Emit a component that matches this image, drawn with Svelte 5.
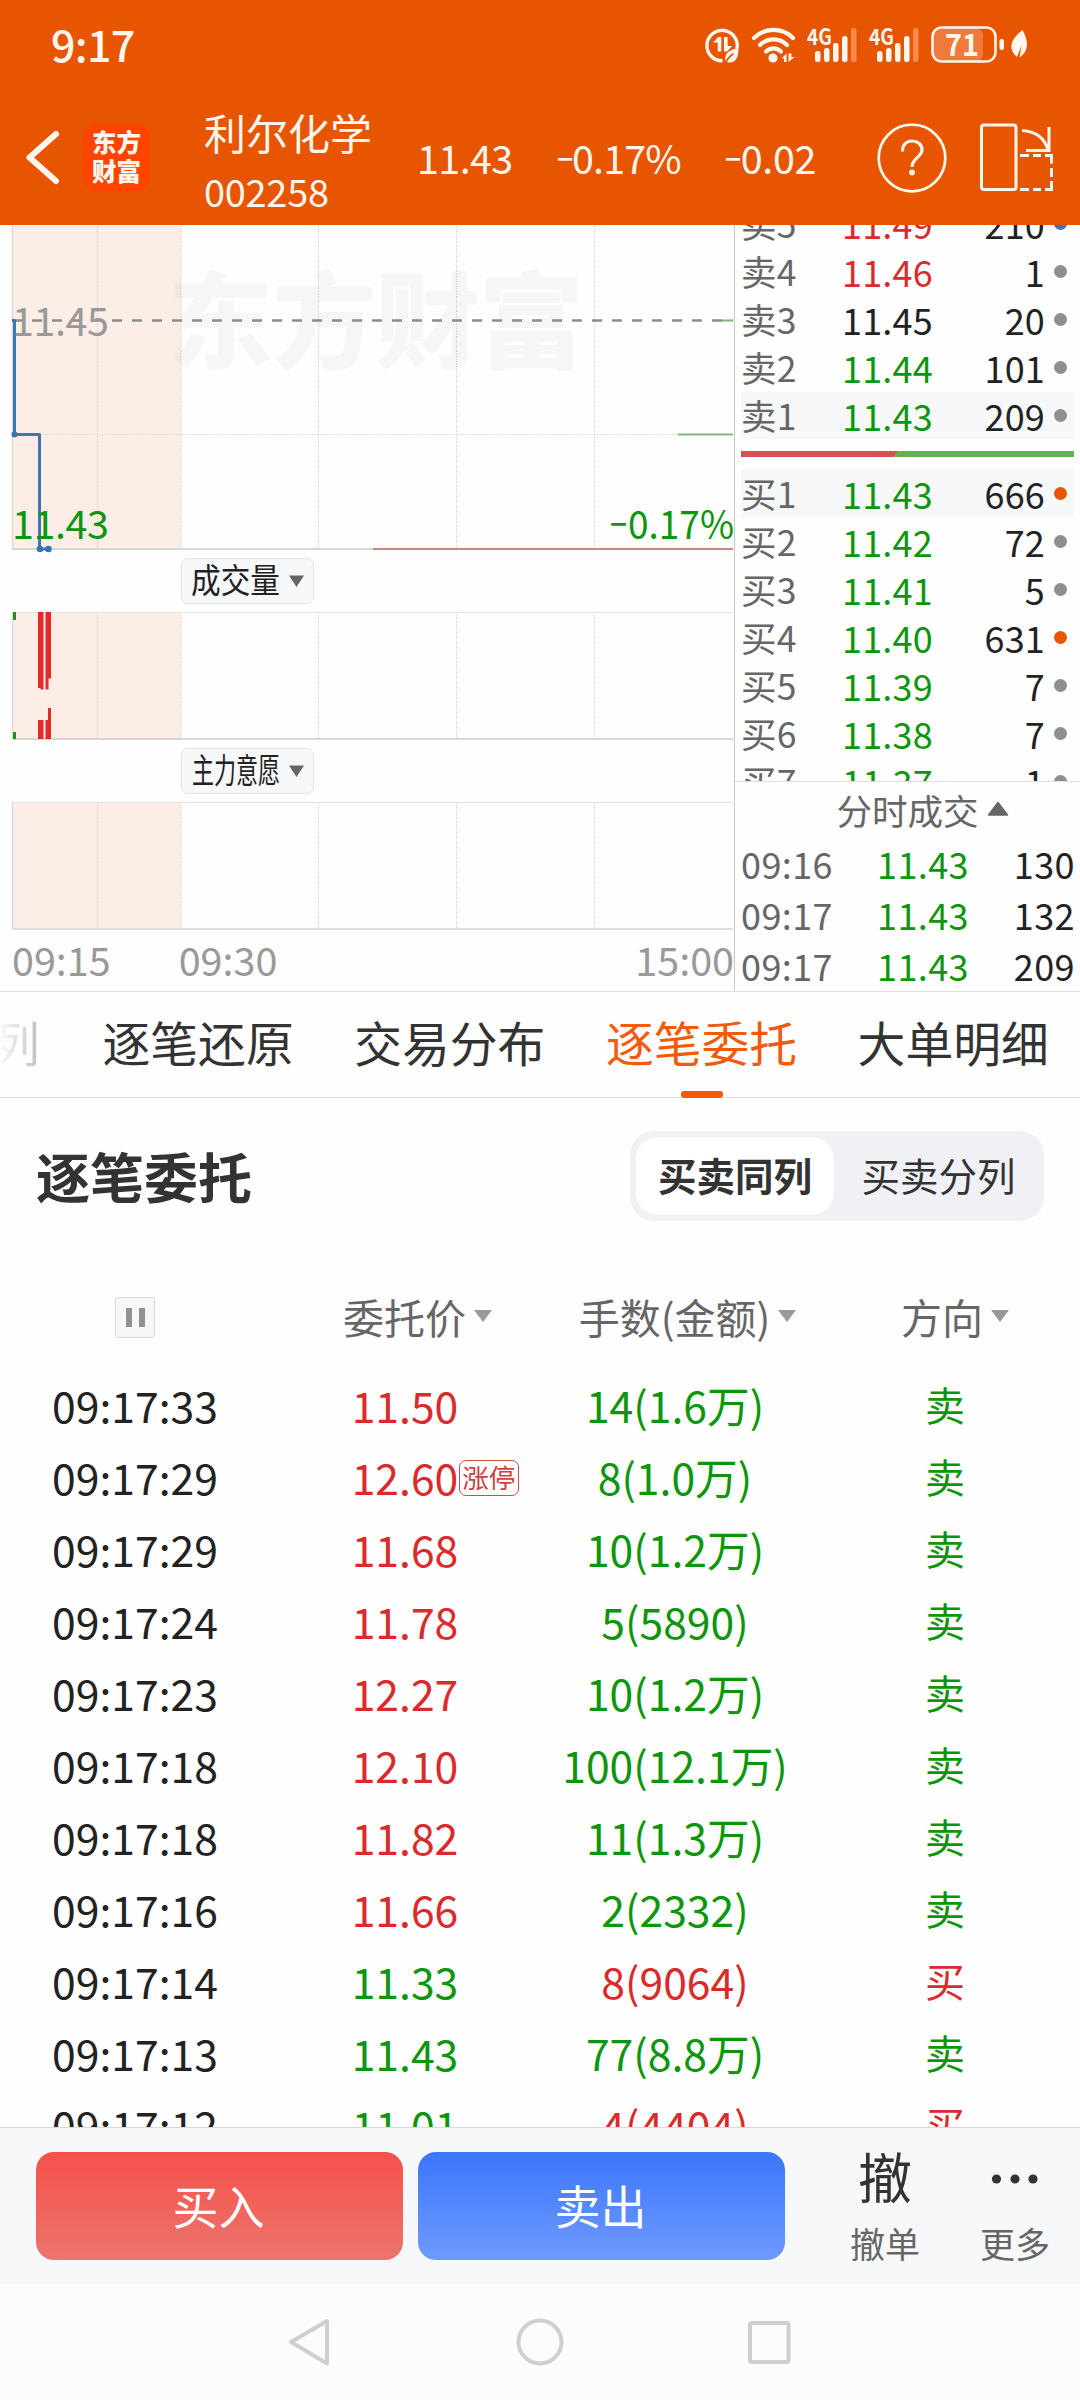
<script>
  const asks = [
    ['卖5', '11.49', 'red', '210', 'blue'],
    ['卖4', '11.46', 'red', '1', ''],
    ['卖3', '11.45', '', '20', ''],
    ['卖2', '11.44', 'green', '101', ''],
    ['卖1', '11.43', 'green', '209', ''],
  ];
  const bids = [
    ['买1', '11.43', 'green', '666', 'orange'],
    ['买2', '11.42', 'green', '72', ''],
    ['买3', '11.41', 'green', '5', ''],
    ['买4', '11.40', 'green', '631', 'orange'],
    ['买5', '11.39', 'green', '7', ''],
    ['买6', '11.38', 'green', '7', ''],
    ['买7', '11.37', 'green', '1', ''],
  ];
  const ticks = [
    ['09:16', '11.43', '130'],
    ['09:17', '11.43', '132'],
    ['09:17', '11.43', '209'],
  ];
  const orders = [
    ['09:17:33', '11.50', 'red', '14(1.6万)', '卖'],
    ['09:17:29', '12.60', 'red', '8(1.0万)', '卖', '涨停'],
    ['09:17:29', '11.68', 'red', '10(1.2万)', '卖'],
    ['09:17:24', '11.78', 'red', '5(5890)', '卖'],
    ['09:17:23', '12.27', 'red', '10(1.2万)', '卖'],
    ['09:17:18', '12.10', 'red', '100(12.1万)', '卖'],
    ['09:17:18', '11.82', 'red', '11(1.3万)', '卖'],
    ['09:17:16', '11.66', 'red', '2(2332)', '卖'],
    ['09:17:14', '11.33', 'green', '8(9064)', '买'],
    ['09:17:13', '11.43', 'green', '77(8.8万)', '卖'],
    ['09:17:12', '11.01', 'green', '4(4404)', '买'],
  ];
  const tabs = ['逐笔还原', '交易分布', '逐笔委托', '大单明细'];
  const gridX = [97.5, 181, 318.5, 456.5, 594.5];
</script>

{#snippet grid(y1, y2)}
  <rect x="12" y={y1} width="169" height={y2 - y1} fill="#fceee7" />
  {#each gridX as x}
    <line x1={x} x2={x} {y1} {y2} stroke="#c9c6c5" stroke-width="1" stroke-dasharray="1 1.5" />
  {/each}
  <line x1="12.5" x2="12.5" {y1} {y2} stroke="#dedad8" stroke-width="1.5" />
{/snippet}

{#snippet selector(label, x, length)}
  <div class="selector">
    <svg width="132" height="46" viewBox="0 0 132 46">
      <text {x} y="34.5" font-size="34" fill="#222" textLength={length} lengthAdjust="spacingAndGlyphs">{label}</text>
      <path d="M108 17.5h15l-7.5 11.5z" fill="#666" />
    </svg>
  </div>
{/snippet}

{#snippet level(row, marked)}
  <div class="level" class:marked>
    <span class="name">{row[0]}</span>
    <span class="price {row[2]}">{row[1]}</span>
    <span class="vol">{row[3]}</span>
    <i class="dot {row[4]}"></i>
  </div>
{/snippet}

{#snippet signal()}
  <svg class="signal" width="50" height="40" viewBox="0 0 50 40">
    <text x="0" y="19.5" font-size="22" font-weight="700" fill="#fff7ee" textLength="25" lengthAdjust="spacingAndGlyphs">4G</text>
    <g fill="#fff7ee">
      <rect x="8" y="26" width="5.5" height="11" rx="2.5" />
      <rect x="17" y="23" width="5.5" height="14" rx="2.5" />
      <rect x="26" y="18" width="5.5" height="19" rx="2.5" />
      <rect x="35" y="11" width="5.5" height="26" rx="2.5" />
      <rect x="44" y="3" width="5.5" height="34" rx="2.5" fill="#fa8a4c" />
    </g>
  </svg>
{/snippet}

<div class="screen">
  <header>
    <div class="status">
      <span class="clock">9:17</span>
      <div class="sys">
        <svg width="36" height="40" viewBox="0 0 36 40">
          <path d="M18.500 35.800A15.200 15.200 0 1 1 33 23.500" fill="none" stroke="#fff7ee" stroke-width="3.400" />
          <g fill="#fff7ee">
            <path d="M9 17.500l5.300-5.500h3v14.500h-3.600v-9z" />
            <path d="M20 12h3.600v9h4.600l-5.200 5.500h-3z" />
            <path d="M21.500 36.500c-1.500-8 3-11.500 13-13.500 0 8.500-2 15-10 14.500z" />
          </g>
          <path d="M21.500 38c2-4.500 4.500-7 8-9.500" fill="none" stroke="#e85500" stroke-width="1.600" />
        </svg>
        <svg class="wifi" width="46" height="40" viewBox="0 0 46 40">
          <g fill="none" stroke="#fff7ee" stroke-width="4.200" stroke-linecap="round">
            <path d="M3 13a27.500 27.500 0 0 1 39 0" />
            <path d="M9 20a19 19 0 0 1 27 0" />
            <path d="M15 26.500a10.500 10.500 0 0 1 15 0" />
          </g>
          <circle cx="22" cy="33" r="4.600" fill="#fff7ee" />
          <path d="M30.500 33.500l5-5v8.500h-2.500v-3.500zM37.500 28.500v8.500l6-5h-3v-3.500z" fill="#fff7ee" />
        </svg>
        {@render signal()}
        {@render signal()}
        <svg class="battery" width="100" height="40" viewBox="0 0 100 40">
          <rect x="2" y="3" width="50" height="34" rx="8" fill="#f07a3c" />
          <rect x="1.500" y="2.500" width="63" height="34" rx="9" fill="none" stroke="#fff7ee" stroke-width="2.600" />
          <rect x="68.500" y="14" width="4.500" height="11" rx="2" fill="#fff7ee" />
          <text x="31" y="31" text-anchor="middle" font-size="31" font-weight="700" fill="#fff7ee" textLength="34" lengthAdjust="spacingAndGlyphs">71</text>
          <path d="M91.500 5c5 9 8 20-3 27.500l2-12-4.500 11.500c-10-9-6-18 5.500-27z" fill="#fff7ee" />
        </svg>
      </div>
    </div>
    <div class="title-bar">
      <svg class="back" width="36" height="56" viewBox="0 0 36 56"><path d="M32 4L5.500 27.500 32 51" fill="none" stroke="#fff7ee" stroke-width="6" stroke-linecap="round" stroke-linejoin="round" /></svg>
      <div class="logo"><span>东方</span><span>财富</span></div>
      <div class="stock"><span class="stock-name">利尔化学</span><span class="code">002258</span></div>
      <span class="quote q1">11.43</span>
      <span class="quote q2"><b>−</b>0.17%</span>
      <span class="quote q3"><b>−</b>0.02</span>
      <svg class="help" width="70" height="70" viewBox="0 0 70 70">
        <circle cx="35" cy="35" r="33.300" fill="none" stroke="#fff7ee" stroke-width="2.700" />
        <path d="M25.500 28.500c0-7 4-10.500 9.700-10.500s9.800 3.500 9.800 9c0 7-10 8-10 17" fill="none" stroke="#fff7ee" stroke-width="3.200" />
        <circle cx="35" cy="49.500" r="2.900" fill="#fff7ee" />
      </svg>
      <svg class="rotate" width="74" height="70" viewBox="0 0 74 70">
        <g fill="none" stroke="#fff7ee" stroke-width="3">
          <rect x="1.500" y="2" width="34.500" height="64.500" rx="2.500" />
          <path d="M42 7.500C56 8.500 65 15 68 27.500M69 4v23.500H46" />
          <path d="M40 32.500h9M53 32.500h8M65 32.500h6.500v8M71.500 45v9M71.500 58v8.500H65M61 66.500h-8M49 66.500h-9" />
        </g>
      </svg>
    </div>
  </header>

  <section class="market">
    <div class="chart">
      <svg width="734" height="326" viewBox="0 225 734 326">
        {@render grid(226, 549)}
        <text x="168" y="360" font-size="105" font-weight="900" fill="#000" fill-opacity="0.03" textLength="416">东方财富</text>
        <line x1="12" x2="733" y1="434.500" y2="434.500" stroke="#d0d0d0" stroke-dasharray="1 1.500" />
        <line x1="12" x2="733" y1="320.500" y2="320.500" stroke="#8c8c8c" stroke-width="2.500" stroke-dasharray="10 10" />
        <path d="M722 320.500h11M678 434.500h55" stroke="#80b880" stroke-width="2" />
        <line x1="12" x2="373" y1="549" y2="549" stroke="#d6d6d6" stroke-width="2" />
        <line x1="373" x2="733" y1="549" y2="549" stroke="#cd8580" stroke-width="2" />
        <path d="M12 320.500h2.500V434.500H39.500V549H49" fill="none" stroke="#3f75b5" stroke-width="3" stroke-linejoin="round" />
        <g fill="#3672b8"><circle cx="14.500" cy="434.500" r="3" /><circle cx="40" cy="549" r="3.300" /><circle cx="48.500" cy="549" r="3.300" /></g>
        <text x="12" y="335.500" font-size="39.500" fill="#999" textLength="97">11.45</text>
        <text x="12" y="538.500" font-size="39.500" fill="#0d960d" textLength="97">11.43</text>
        <text x="610" y="538.500" font-size="39.500" fill="#0d960d" textLength="17" lengthAdjust="spacingAndGlyphs">−</text>
        <text x="628" y="538.500" font-size="39.500" fill="#0d960d" textLength="106" lengthAdjust="spacingAndGlyphs">0.17%</text>
      </svg>
      <div class="select-row">{@render selector('成交量', 10, 89)}</div>
      <svg width="734" height="129" viewBox="0 611 734 129">
        {@render grid(612, 739)}
        <line x1="12" x2="733" y1="612.500" y2="612.500" stroke="#e2e2e2" />
        <line x1="12" x2="733" y1="739" y2="739" stroke="#d6d6d6" stroke-width="2" />
        <path d="M13 612h3v8h-3zM13 732h3v7h-3z" fill="#228b22" />
        <path d="M38 612h5.500v77.500h-3V688H38zM45.500 612h5.500v66.500h-2.500v11h-3zM38 720h5.500v19H38zM45.500 720h2.500v-12h3v31h-5.500z" fill="#e32a2a" />
      </svg>
      <div class="select-row">{@render selector('主力意愿', 11, 88)}</div>
      <svg width="734" height="130" viewBox="0 801 734 130">
        {@render grid(802, 929)}
        <line x1="12" x2="733" y1="802.500" y2="802.500" stroke="#e2e2e2" />
        <line x1="12" x2="733" y1="929" y2="929" stroke="#dedede" stroke-width="2" />
      </svg>
      <div class="axis"><span>09:15</span><span class="open">09:30</span><span class="close">15:00</span></div>
    </div>
    <aside>
      <div class="book">
        {#each asks as row, i}{@render level(row, i === 4)}{/each}
        <svg class="ratio" width="333" height="6" viewBox="0 0 333 6">
          <path d="M0 0h158l-5 6H0z" fill="#d95052" />
          <path d="M158 0h175v6H153z" fill="#62b34c" />
        </svg>
        {#each bids as row, i}{@render level(row, i === 0)}{/each}
      </div>
      <div class="ticks">
        <div class="ticks-title">分时成交<svg width="22" height="15" viewBox="0 0 22 15"><path d="M1.500 14L11 1.500 20.500 14z" fill="#666" stroke="#666" stroke-width="1.500" stroke-linejoin="round" /></svg></div>
        {#each ticks as t}
          <div class="tick"><span class="name">{t[0]}</span><span class="green">{t[1]}</span><span class="vol">{t[2]}</span></div>
        {/each}
      </div>
    </aside>
  </section>

  <nav class="tabs">
    <span class="fade">列</span>
    {#each tabs as tab}
      <span class="tab" class:active={tab === '逐笔委托'}>{tab}</span>
    {/each}
  </nav>

  <section class="heading">
    <h2>逐笔委托</h2>
    <div class="segmented"><span class="on">买卖同列</span><span>买卖分列</span></div>
  </section>

  <section class="orders">
    <div class="row head">
      <div class="cell"><span class="pause"><i></i><i></i></span></div>
      <div class="cell sort">委托价<i class="tri"></i></div>
      <div class="cell sort">手数(金额)<i class="tri"></i></div>
      <div class="cell sort last">方向<i class="tri"></i></div>
    </div>
    {#each orders as o}
      <div class="row">
        <div class="cell">{o[0]}</div>
        <div class="cell {o[2]}"><span class="px">{o[1]}{#if o[5]}<em>{o[5]}</em>{/if}</span></div>
        <div class="cell {o[4] === '买' ? 'red' : 'green'}">{o[3]}</div>
        <div class="cell dir {o[4] === '买' ? 'red' : 'green'}">{o[4]}</div>
      </div>
    {/each}
  </section>

  <footer>
    <button class="buy">买入</button>
    <button class="sell">卖出</button>
    <div class="action first"><span class="glyph">撤</span><span>撤单</span></div>
    <div class="action"><span class="glyph dots"><svg width="48" height="12" viewBox="0 0 48 12"><g fill="#333"><circle cx="5.500" cy="6" r="4.600" /><circle cx="24" cy="6" r="4.600" /><circle cx="42" cy="6" r="4.600" /></g></svg></span><span>更多</span></div>
  </footer>

  <div class="navbar">
    <svg width="1080" height="116" viewBox="0 0 1080 116" fill="none" stroke="#cfcfcf" stroke-width="4" stroke-linejoin="round">
      <path d="M327 37v42.500L291 58z" />
      <circle cx="540" cy="58" r="21.500" />
      <rect x="750" y="39" width="38.500" height="39" rx="2" />
    </svg>
  </div>
</div>

<style>
  :global(body) { margin: 0; background: #fdfdfd; }
  .screen {
    width: 1080px; height: 2400px; overflow: hidden; display: flex; flex-direction: column;
    background: #fefefe; color: #222; font-family: 'Noto Sans CJK SC', sans-serif; white-space: nowrap;
  }
  svg { display: block; flex: none; overflow: visible; }
  i, em { font-style: normal; }
  .red { color: #d92b2b; }
  .green { color: #0d960d; }

  header { height: 225px; flex: none; background: #e85500; color: #fff7ee; }
  .status { height: 90px; display: flex; justify-content: space-between; padding: 0 49px 0 51px; }
  .clock { font-size: 43px; font-weight: 500; line-height: 86px; letter-spacing: -0.700px; }
  .sys { display: flex; align-items: flex-start; padding-top: 25px; }
  .wifi { margin: 0 10px 0 11px; }
  .signal { margin-right: 12px; }
  .title-bar { height: 135px; display: flex; align-items: center; }
  .back { margin-left: 24px; }
  .logo {
    width: 67px; height: 68px; margin-left: 23px; border-radius: 14px; background: #ff4400; display: flex;
    flex-direction: column; align-items: center; justify-content: center; font-size: 24.500px; font-weight: 900; line-height: 29px;
    box-sizing: border-box; padding-bottom: 4px;
  }
  .stock { margin-left: 54px; width: 213px; display: flex; flex-direction: column; padding-top: 8px; }
  .stock-name { font-size: 42px; line-height: 58px; }
  .code { font-size: 38px; line-height: 60px; letter-spacing: -0.300px; }
  .quote { font-size: 39.500px; line-height: 60px; margin-top: -2px; }
  .quote b { display: inline-block; font-weight: 400; transform: scaleX(0.75); margin: 0 -3px; }
  .q1 { width: 140px; letter-spacing: -0.600px; }
  .q2 { width: 168px; letter-spacing: -0.900px; }
  .q3 { width: 152px; letter-spacing: -0.300px; }
  .help { margin-left: 0; }
  .rotate { margin-left: 33px; }

  .market { height: 766px; flex: none; display: flex; border-bottom: 1px solid #e0e0e0; }
  .chart { width: 734px; flex: none; border-right: 1px solid #c8c8c8; }
  .select-row { height: 60px; padding-left: 181px; display: flex; align-items: center; }
  .select-row ~ .select-row { height: 61px; }
  .selector { border: 1px solid #e2e3e6; border-radius: 7px; background: #f7f8fa; height: 44px; display: flex; align-items: center; width: 131px; }
  .selector svg { margin-left: -1px; }
  .axis { display: flex; padding: 1px 0 0 12px; font-size: 39.500px; line-height: 54px; color: #999; }
  .open { margin-left: 68px; }
  .close { margin-left: auto; }

  aside { flex: 1; overflow: hidden; display: flex; flex-direction: column; }
  .book { height: 556px; flex: none; overflow: hidden; padding: 0 6px; display: flex; flex-direction: column; }
  .level { height: 48px; flex: none; display: grid; grid-template-columns: 101px 101px 102px 29px; align-items: center; font-size: 36px; line-height: 46px; letter-spacing: 0.200px; }
  .level:first-child { margin-top: -26px; }
  .level .name { font-size: 35.500px; }
  .level .vol { text-align: right; }
  .marked { background: #f6f8fa; }
  .name { color: #666; }
  .dot { width: 13px; height: 13px; border-radius: 50%; background: #8e8e93; margin-left: 9px; }
  .dot.orange { background: #e85500; }
  .dot.blue { background: #3f75b5; }
  .ratio { margin: 12px 0; }
  .ticks { border-top: 1px solid #e0e0e0; font-size: 36px; }
  .ticks-title { height: 56px; display: flex; align-items: center; justify-content: center; gap: 8px; color: #666; font-size: 35.500px; padding-left: 30px; line-height: 54px; }
  .ticks-title svg { margin-top: -3px; }
  .tick { height: 51px; line-height: 50px; padding: 0 5px 0 6px; display: grid; grid-template-columns: 136px 95px 103px; letter-spacing: 0.400px; }
  .tick .vol { text-align: right; }

  .tabs { height: 105px; flex: none; border-bottom: 1px solid #e0e0e0; display: flex; gap: 60.500px; font-size: 47.800px; line-height: 99px; color: #333; }
  .fade { margin-left: -8px; width: 50px; flex: none; color: transparent; background: linear-gradient(90deg, #fff 10%, #bbb); background-clip: text; -webkit-background-clip: text; }
  .tab { position: relative; flex: none; }
  .active { color: #f25a0c; }
  .active::after { content: ''; position: absolute; left: 75px; bottom: -1px; width: 42px; height: 7px; border-radius: 3px; background: #f25a0c; }

  .heading { height: 158px; flex: none; box-sizing: border-box; display: flex; align-items: center; justify-content: space-between; padding: 0 36px; }
  h2 { margin: -3px 0 0; font-size: 54px; font-weight: 700; color: #333; line-height: 80px; }
  .segmented { width: 414px; height: 90px; box-sizing: border-box; padding: 6px; border-radius: 24px; background: #f0f1f4; display: flex; font-size: 38.500px; line-height: 74px; color: #333; text-align: center; margin-top: -2px; }
  .segmented span { flex: 1; padding-left: 5px; }
  .segmented .on { flex: none; width: 198px; padding: 0; border-radius: 22px; background: #fff; font-weight: 700; }

  .orders { height: 871px; flex: none; overflow: hidden; box-sizing: border-box; }
  .row { height: 72px; display: grid; grid-template-columns: repeat(4, 270px); }
  .cell { display: flex; align-items: center; justify-content: center; font-size: 42.700px; line-height: 72px; }
  .dir { font-size: 40px; }
  .px { position: relative; }
  .px em { position: absolute; left: 107px; top: 20px; height: 34px; width: 58px; box-sizing: content-box; border: 1.500px solid #d04a48; border-radius: 7px; font-size: 26.500px; line-height: 32px; text-align: center; color: #d04040; }
  .head { height: 112px; }
  .head .cell { height: 120px; line-height: 120px; color: #666; font-size: 41px; }
  .sort { gap: 8px; padding-left: 25px; }
  .sort.last { padding-left: 20px; }
  .tri { border: 9px solid transparent; border-top: 12px solid #999; border-bottom: 0; }
  .pause { width: 38px; height: 39px; border: 1.500px solid #d8dadd; border-radius: 3px; background: #f6f7f9; display: flex; align-items: center; justify-content: center; gap: 7px; margin-top: 3px; }
  .pause i { width: 6px; height: 19px; background: #919191; }

  footer { height: 157px; flex: none; box-sizing: border-box; border-top: 1px solid #d8d9db; background: #f7f8fa; display: flex; padding: 24px 0 0 36px; }
  button { width: 367px; height: 108px; border: 0; border-radius: 18px; color: #fff; font: 46px/104px 'Noto Sans CJK SC', sans-serif; padding: 0 2px 5px 0; margin-right: 15px; }
  .buy { background: linear-gradient(#f5504a, #ec756e); }
  .sell { background: linear-gradient(#3b76fa, #6e9aff); }
  .action { width: 130px; display: flex; flex-direction: column; align-items: center; font-size: 35px; line-height: 50px; color: #666; }
  .first { margin-left: 20px; }
  .glyph { height: 54px; line-height: 50px; font-size: 54px; color: #333; display: flex; align-items: center; margin: -3px 0 15px; }
  .dots { margin: 0 0 12px; }
  .navbar { height: 116px; flex: none; background: #fcfcfc; }
</style>
